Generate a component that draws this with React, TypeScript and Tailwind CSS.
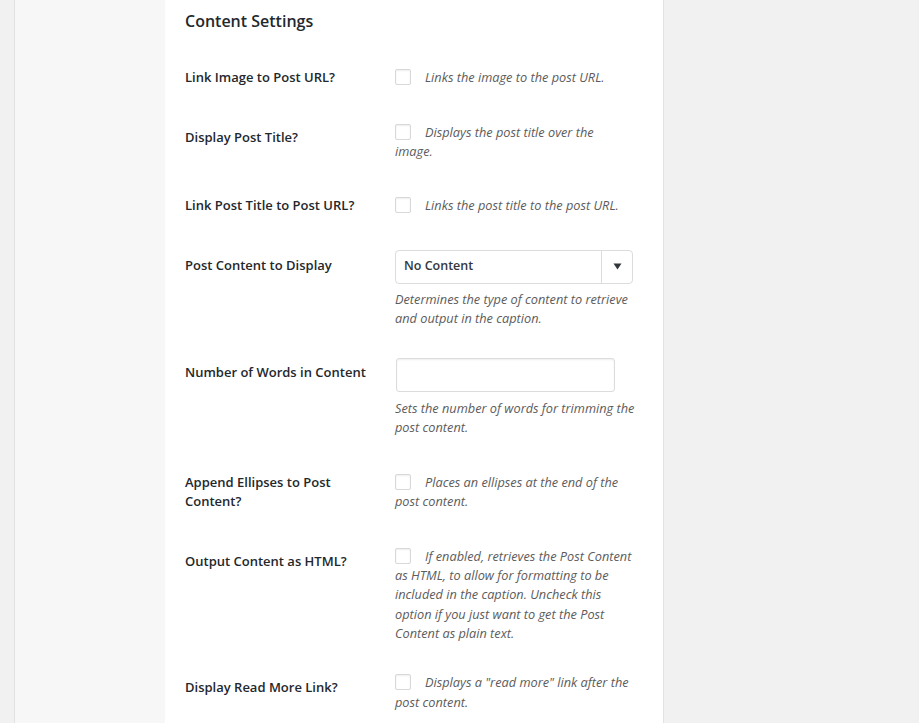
import React from 'react'

const font = { fontFamily: '"Open Sans", "Noto Sans", sans-serif' }

function Checkbox() {
  return (
    <span className="inline-block w-[16px] h-[16px] mr-[14px] align-middle border border-[#d8d8d8] rounded-[2px] bg-white shadow-[inset_0_1px_2px_rgba(0,0,0,0.07)] -mt-[3px]" />
  )
}

function Row({ label, children }: { label: React.ReactNode; children: React.ReactNode }) {
  return (
    <div className="flex">
      <div className="w-[210px] shrink-0 self-start py-[20px] pr-[10px] text-[13px] leading-[19.5px] font-semibold text-[#23282d]">
        {label}
      </div>
      <div className="w-[240px] self-center py-[15px]">{children}</div>
    </div>
  )
}

function Desc({ children }: { children: React.ReactNode }) {
  return <span className="italic text-[#5c5c5c]">{children}</span>
}

function CheckRow({ label, desc }: { label: React.ReactNode; desc: React.ReactNode }) {
  return (
    <Row label={label}>
      <div className="text-[12.75px] leading-[19.3px]">
        <Checkbox />
        <Desc>{desc}</Desc>
      </div>
    </Row>
  )
}

export default function App() {
  return (
    <div className="h-[723px] overflow-hidden flex bg-[#f1f1f1]" style={font}>
      <div className="w-[14px] shrink-0" />
      <div className="w-[151px] shrink-0 bg-[#f7f7f7] border-l border-[#e2e2e2]" />
      <div className="w-[499px] shrink-0 bg-white border-r border-[#e2e2e2] pl-[20px] pt-[9px]">
        <h2 className="text-[16px] leading-[24px] font-semibold text-[#23282d]">Content Settings</h2>
        <div className="mt-[15px]">
          <CheckRow label="Link Image to Post URL?" desc="Links the image to the post URL." />
          <CheckRow label="Display Post Title?" desc={<>Displays the post title over the<br />image.</>} />
          <CheckRow label="Link Post Title to Post URL?" desc="Links the post title to the post URL." />
          <Row label="Post Content to Display">
            <div className="-mt-[1px] w-[238px] h-[34px] flex items-stretch border border-[#dcdcdc] rounded-[4px] bg-white">
              <div className="flex-1 flex items-center pl-[8px] text-[12.5px] font-semibold text-[#32373c]">No Content</div>
              <div className="w-[31px] border-l border-[#dcdcdc] flex items-center justify-center">
                <svg width="9" height="7" viewBox="0 0 9 7">
                  <path d="M0.5 0.5 H8.5 L4.5 6.5 Z" fill="#32373c" />
                </svg>
              </div>
            </div>
            <p className="mt-[6px] text-[12.75px] leading-[19.3px]">
              <Desc>Determines the type of content to retrieve and output in the caption.</Desc>
            </p>
          </Row>
          <Row label="Number of Words in Content">
            <div className="ml-[1px] w-[219px] h-[34px] border border-[#dcdcdc] rounded-[3px] bg-white shadow-[inset_0_1px_2px_rgba(0,0,0,0.07)]" />
            <p className="mt-[7px] text-[12.75px] leading-[19.3px]">
              <Desc>Sets the number of words for trimming the post content.</Desc>
            </p>
          </Row>
          <CheckRow
            label={<>Append Ellipses to Post<br />Content?</>}
            desc="Places an ellipses at the end of the post content."
          />
          <CheckRow
            label="Output Content as HTML?"
            desc="If enabled, retrieves the Post Content as HTML, to allow for formatting to be included in the caption. Uncheck this option if you just want to get the Post Content as plain text."
          />
          <CheckRow label="Display Read More Link?" desc='Displays a "read more" link after the post content.' />
        </div>
      </div>
    </div>
  )
}
